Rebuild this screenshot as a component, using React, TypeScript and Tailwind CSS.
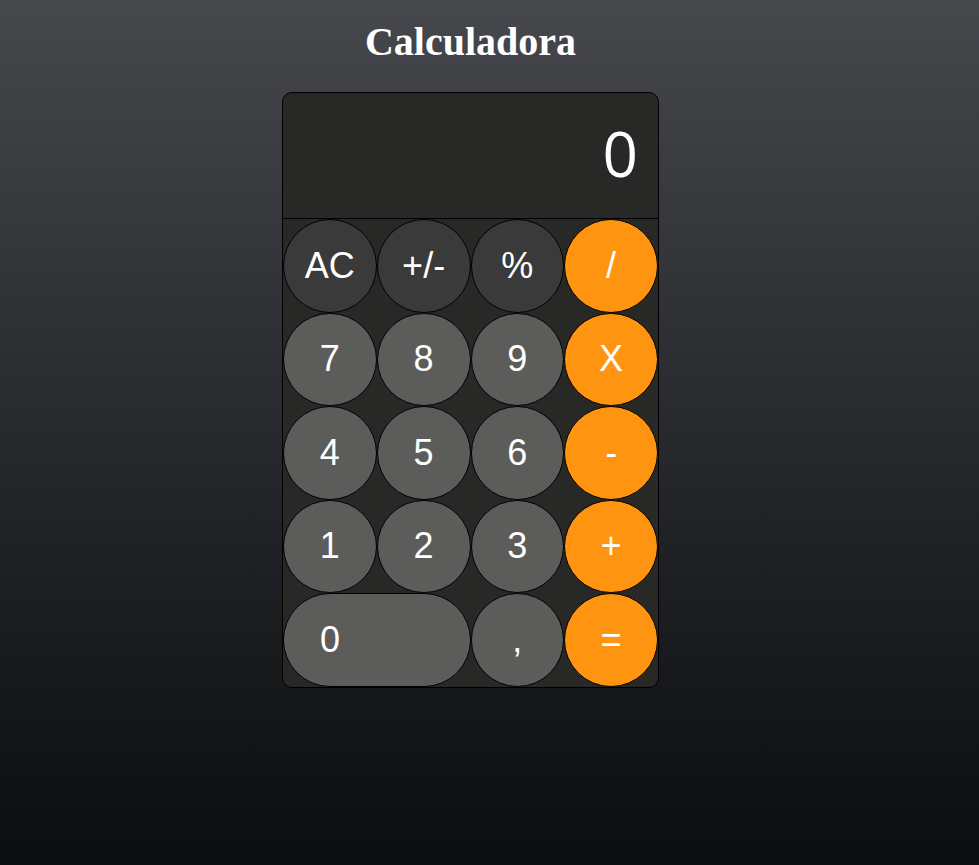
import React, { useState } from 'react'

type Key = { label: string; kind: 'fn' | 'num' | 'op'; wide?: boolean }

const keys: Key[] = [
  { label: 'AC', kind: 'fn' },
  { label: '+/-', kind: 'fn' },
  { label: '%', kind: 'fn' },
  { label: '/', kind: 'op' },
  { label: '7', kind: 'num' },
  { label: '8', kind: 'num' },
  { label: '9', kind: 'num' },
  { label: 'X', kind: 'op' },
  { label: '4', kind: 'num' },
  { label: '5', kind: 'num' },
  { label: '6', kind: 'num' },
  { label: '-', kind: 'op' },
  { label: '1', kind: 'num' },
  { label: '2', kind: 'num' },
  { label: '3', kind: 'num' },
  { label: '+', kind: 'op' },
  { label: '0', kind: 'num', wide: true },
  { label: ',', kind: 'num' },
  { label: '=', kind: 'op' },
]

const kindClass = {
  fn: 'bg-[#3a3a3a]',
  num: 'bg-[#5c5c5a]',
  op: 'bg-[#ff9410]',
}

export default function App() {
  const [display, setDisplay] = useState('0')

  const press = (k: string) => {
    if (k === 'AC') setDisplay('0')
    else if (/[0-9]/.test(k)) setDisplay((d) => (d === '0' ? k : d + k))
  }

  return (
    <main className="min-h-screen bg-gradient-to-b from-[#46484d] to-[#0c0d0f] flex flex-col items-center pr-[38px]">
      <h1
        className="mt-[19px] mb-[27px] text-[40px] leading-[46px] font-bold text-white"
        style={{ fontFamily: '"Liberation Serif", "Times New Roman", serif' }}
      >
        Calculadora
      </h1>

      <div className="w-[377px] rounded-[10px] border border-black bg-[#282826] overflow-hidden">
        {/* Display */}
        <div
          className="h-[126px] border-b border-black flex items-center justify-end pr-[20px] pb-[5px] text-white text-[62px] leading-none"
          style={{ fontFamily: '"Open Sans", "Noto Sans", sans-serif' }}
        >
          {display}
        </div>

        {/* Keypad */}
        <div
          className="grid grid-cols-4"
          style={{ fontFamily: '"Liberation Sans", Arial, sans-serif' }}
        >
          {keys.map((k) => (
            <button
              key={k.label}
              onClick={() => press(k.label)}
              className={`h-[93.5px] rounded-full border border-black text-white text-[36px] flex items-center ${kindClass[k.kind]} ${
                k.wide ? 'col-span-2 justify-start pl-[36px]' : 'justify-center'
              }`}
            >
              {k.label}
            </button>
          ))}
        </div>
      </div>
    </main>
  )
}
